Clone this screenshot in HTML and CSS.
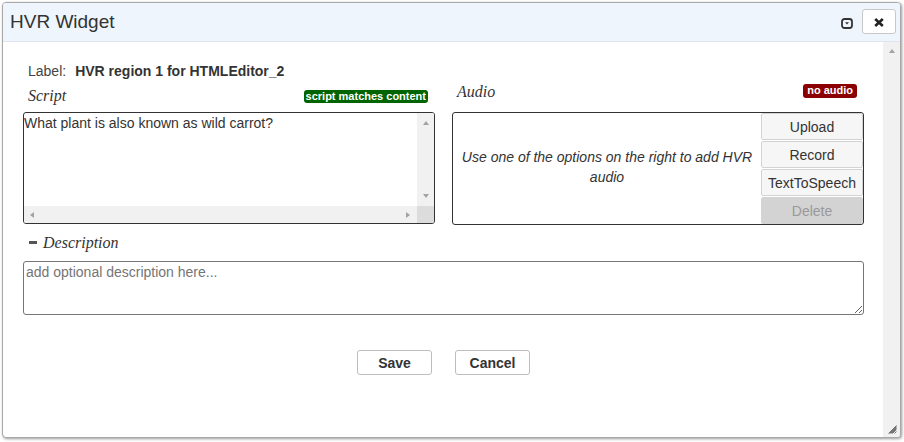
FILE: index.html
```html
<!DOCTYPE html>
<html>
<head>
<meta charset="utf-8">
<title>HVR Widget</title>
<link rel="stylesheet" href="styles.css">
</head>
<body>
<div class="dialog">
  <div class="titlebar">
    <span class="title">HVR Widget</span>
    <span class="tools">
      <span class="min-icon"><svg width="12" height="11" viewBox="0 0 12 11"><rect x="1" y="1" width="10" height="9" rx="2.5" fill="none" stroke="#333" stroke-width="1.8"/><path d="M4 4.3 L8 4.3 L6 6.6 Z" fill="#333"/></svg></span>
      <button class="close-btn"><svg width="10" height="9" viewBox="0 0 10 9"><path d="M1.2 1 L8.8 8 M8.8 1 L1.2 8" stroke="#222" stroke-width="2.6" stroke-linecap="butt"/></svg></button>
    </span>
  </div>
  <div class="body">
    <div class="content">
      <div class="label-row"><span class="label-key">Label:</span><span class="label-val">HVR region 1 for HTMLEditor_2</span></div>
      <div class="columns">
        <div class="col col-script">
          <div class="col-head head-script"><span class="field-title">Script</span><span class="badge badge-ok">script matches content</span></div>
          <div class="script-box">
            <div class="script-text">What plant is also known as wild carrot?</div>
            <div class="vbar"><span class="arr arr-up"></span><span class="arr arr-down"></span></div>
            <div class="hbar"><span class="arr arr-left"></span><span class="arr arr-right"></span></div>
            <div class="corner"></div>
          </div>
        </div>
        <div class="col col-audio">
          <div class="col-head head-audio"><span class="field-title">Audio</span><span class="badge badge-no">no audio</span></div>
          <div class="audio-box">
            <div class="audio-msg">Use one of the options on the right to add HVR audio</div>
            <div class="audio-btns">
              <button class="abtn">Upload</button>
              <button class="abtn">Record</button>
              <button class="abtn">TextToSpeech</button>
              <button class="abtn abtn-disabled" disabled>Delete</button>
            </div>
          </div>
        </div>
      </div>
      <div class="desc-row"><span class="dash"></span><span class="field-title">Description</span></div>
      <textarea class="desc" placeholder="add optional description here..."></textarea>
      <div class="actions"><button class="act">Save</button><button class="act">Cancel</button></div>
    </div>
    <div class="page-scroll"><span class="arr arr-up"></span></div>
  </div>
  <svg class="grip" width="9" height="9" viewBox="0 0 9 9"><path d="M0.5 8.5 L8.5 0.5 M2.5 8.5 L8.5 2.5 M4.5 8.5 L8.5 4.5 M6.5 8.5 L8.5 6.5 M1.5 8.5 L8.5 1.5 M3.5 8.5 L8.5 3.5" stroke="#555" stroke-width="0.8"/></svg>
</div>
</body>
</html>
```
FILE: styles.css
```css
* { box-sizing: border-box; }
html, body { margin: 0; padding: 0; }
body {
  background: #ffffff;
  width: 904px;
  height: 442px;
  overflow: hidden;
  font-family: "Liberation Sans", Arial, sans-serif;
  color: #333;
}
.dialog {
  position: relative;
  margin: 2px 0 0 2px;
  width: 899px;
  height: 436px;
  border: 1px solid #a8a8a8;
  border-radius: 4px;
  background: #fff;
  box-shadow: 1px 1px 3px rgba(0,0,0,0.4);
  display: flex;
  flex-direction: column;
  overflow: hidden;
}
.titlebar {
  height: 39px;
  flex: none;
  background: #eef5fd;
  border-bottom: 1px solid #dfe5ec;
  display: flex;
  align-items: center;
  justify-content: space-between;
  padding: 0 4px 0 7px;
}
.title {
  font-size: 19px;
  color: #333;
  line-height: 22px;
}
.tools { display: flex; align-items: center; gap: 9px; }
.min-icon { display: flex; width: 12px; height: 11px; margin-top: 2px; }
.close-btn {
  width: 34px;
  height: 25px;
  margin-top: -2px;
  background: #fff;
  border: 1px solid #c8c8c8;
  border-radius: 3px;
  padding: 0;
  display: flex;
  align-items: center;
  justify-content: center;
}
.close-btn svg { margin-top: 2px; }
.body {
  flex: 1;
  display: flex;
  min-height: 0;
}
.content {
  flex: 1;
  padding: 0 19px 0 20px;
}
.page-scroll {
  width: 17px;
  flex: none;
  background: #f1f1f1;
  display: flex;
  justify-content: center;
  padding-top: 7px;
}
.arr { display: block; width: 0; height: 0; }
.arr-up { border-left: 3.5px solid transparent; border-right: 3.5px solid transparent; border-bottom: 4px solid #a3a3a3; }
.arr-down { border-left: 3.5px solid transparent; border-right: 3.5px solid transparent; border-top: 4px solid #a3a3a3; }
.arr-left { border-top: 3.5px solid transparent; border-bottom: 3.5px solid transparent; border-right: 4px solid #a3a3a3; }
.arr-right { border-top: 3.5px solid transparent; border-bottom: 3.5px solid transparent; border-left: 4px solid #a3a3a3; }

.label-row {
  margin-top: 21px;
  padding-left: 5px;
  font-size: 14px;
  line-height: 16px;
  display: flex;
  gap: 9px;
}
.label-key { color: #444; }
.label-val { font-weight: bold; color: #333; }

.columns {
  margin-top: 3px;
  display: flex;
  gap: 17px;
  align-items: flex-start;
}
.col { width: 412px; flex: none; }
.col-head {
  height: 20px;
  display: flex;
  align-items: center;
  justify-content: space-between;
  padding: 0 7px 0 5px;
}
.head-script { margin-top: 4px; margin-bottom: 6px; }
.head-audio { margin-top: 0; margin-bottom: 10px; }
.field-title {
  font-family: "Liberation Serif", "Times New Roman", serif;
  font-style: italic;
  font-size: 16px;
  line-height: 20px;
  color: #333;
}
.badge {
  font-size: 11px;
  font-weight: bold;
  color: #fff;
  line-height: 13px;
  height: 13.5px;
  border-radius: 3px;
  white-space: nowrap;
}
.badge-ok { background: #006400; padding: 0 2px; margin-top: 1px; }
.badge-no { background: #8b0000; padding: 0 4px; margin-top: -2px; }

.script-box {
  height: 112px;
  border: 1px solid #333;
  border-radius: 3px;
  display: grid;
  grid-template-columns: 1fr 17px;
  grid-template-rows: 1fr 17px;
  overflow: hidden;
}
.script-text {
  font-size: 14px;
  line-height: 16px;
  padding: 2px 1px 0 0;
  color: #333;
}
.vbar {
  background: #f1f1f1;
  display: flex;
  flex-direction: column;
  align-items: center;
  justify-content: space-between;
  padding: 8px 0;
}
.hbar {
  background: #f1f1f1;
  display: flex;
  align-items: center;
  justify-content: space-between;
  padding: 0 7px 0 6px;
}
.corner { background: #dcdcdc; }

.audio-box {
  height: 113px;
  border: 1px solid #333;
  border-radius: 3px;
  display: flex;
  overflow: hidden;
}
.audio-msg {
  flex: 1;
  display: flex;
  align-items: center;
  justify-content: center;
  text-align: center;
  font-style: italic;
  font-size: 14px;
  line-height: 20px;
  padding: 0 6px 3px;
  color: #333;
}
.audio-btns {
  width: 102px;
  flex: none;
  display: flex;
  flex-direction: column;
  gap: 1px;
}
.abtn {
  height: 27px;
  font-family: "Liberation Sans", Arial, sans-serif;
  font-size: 14px;
  color: #333;
  background: #f6f6f6;
  border: 1px solid #d3d3d3;
  border-radius: 2px;
  padding: 0;
}
.abtn-disabled {
  background: #d3d3d3;
  color: #999;
  border-color: #d3d3d3;
}

.desc-row {
  margin-top: 8px;
  height: 20px;
  display: flex;
  align-items: center;
  gap: 6px;
  padding-left: 6px;
}
.dash {
  width: 8px;
  height: 3px;
  background: #555;
  margin-top: -1px;
}
.desc {
  display: block;
  margin-top: 8px;
  width: 841px;
  height: 54px;
  border: 1px solid #767676;
  border-radius: 3px;
  padding: 2px 2px;
  font-family: "Liberation Sans", Arial, sans-serif;
  font-size: 14px;
  line-height: 16px;
  color: #333;
  resize: both;
}
.desc::placeholder { color: #757575; }

.actions {
  margin-top: 35px;
  display: flex;
  justify-content: center;
  gap: 23px;
}
.act {
  width: 75px;
  height: 25px;
  background: #fff;
  border: 1px solid #bdbdbd;
  border-radius: 3px;
  font-family: "Liberation Sans", Arial, sans-serif;
  font-weight: bold;
  font-size: 14px;
  color: #333;
  padding: 0;
}
.grip {
  position: absolute;
  right: 3px;
  bottom: 3px;
}
```
